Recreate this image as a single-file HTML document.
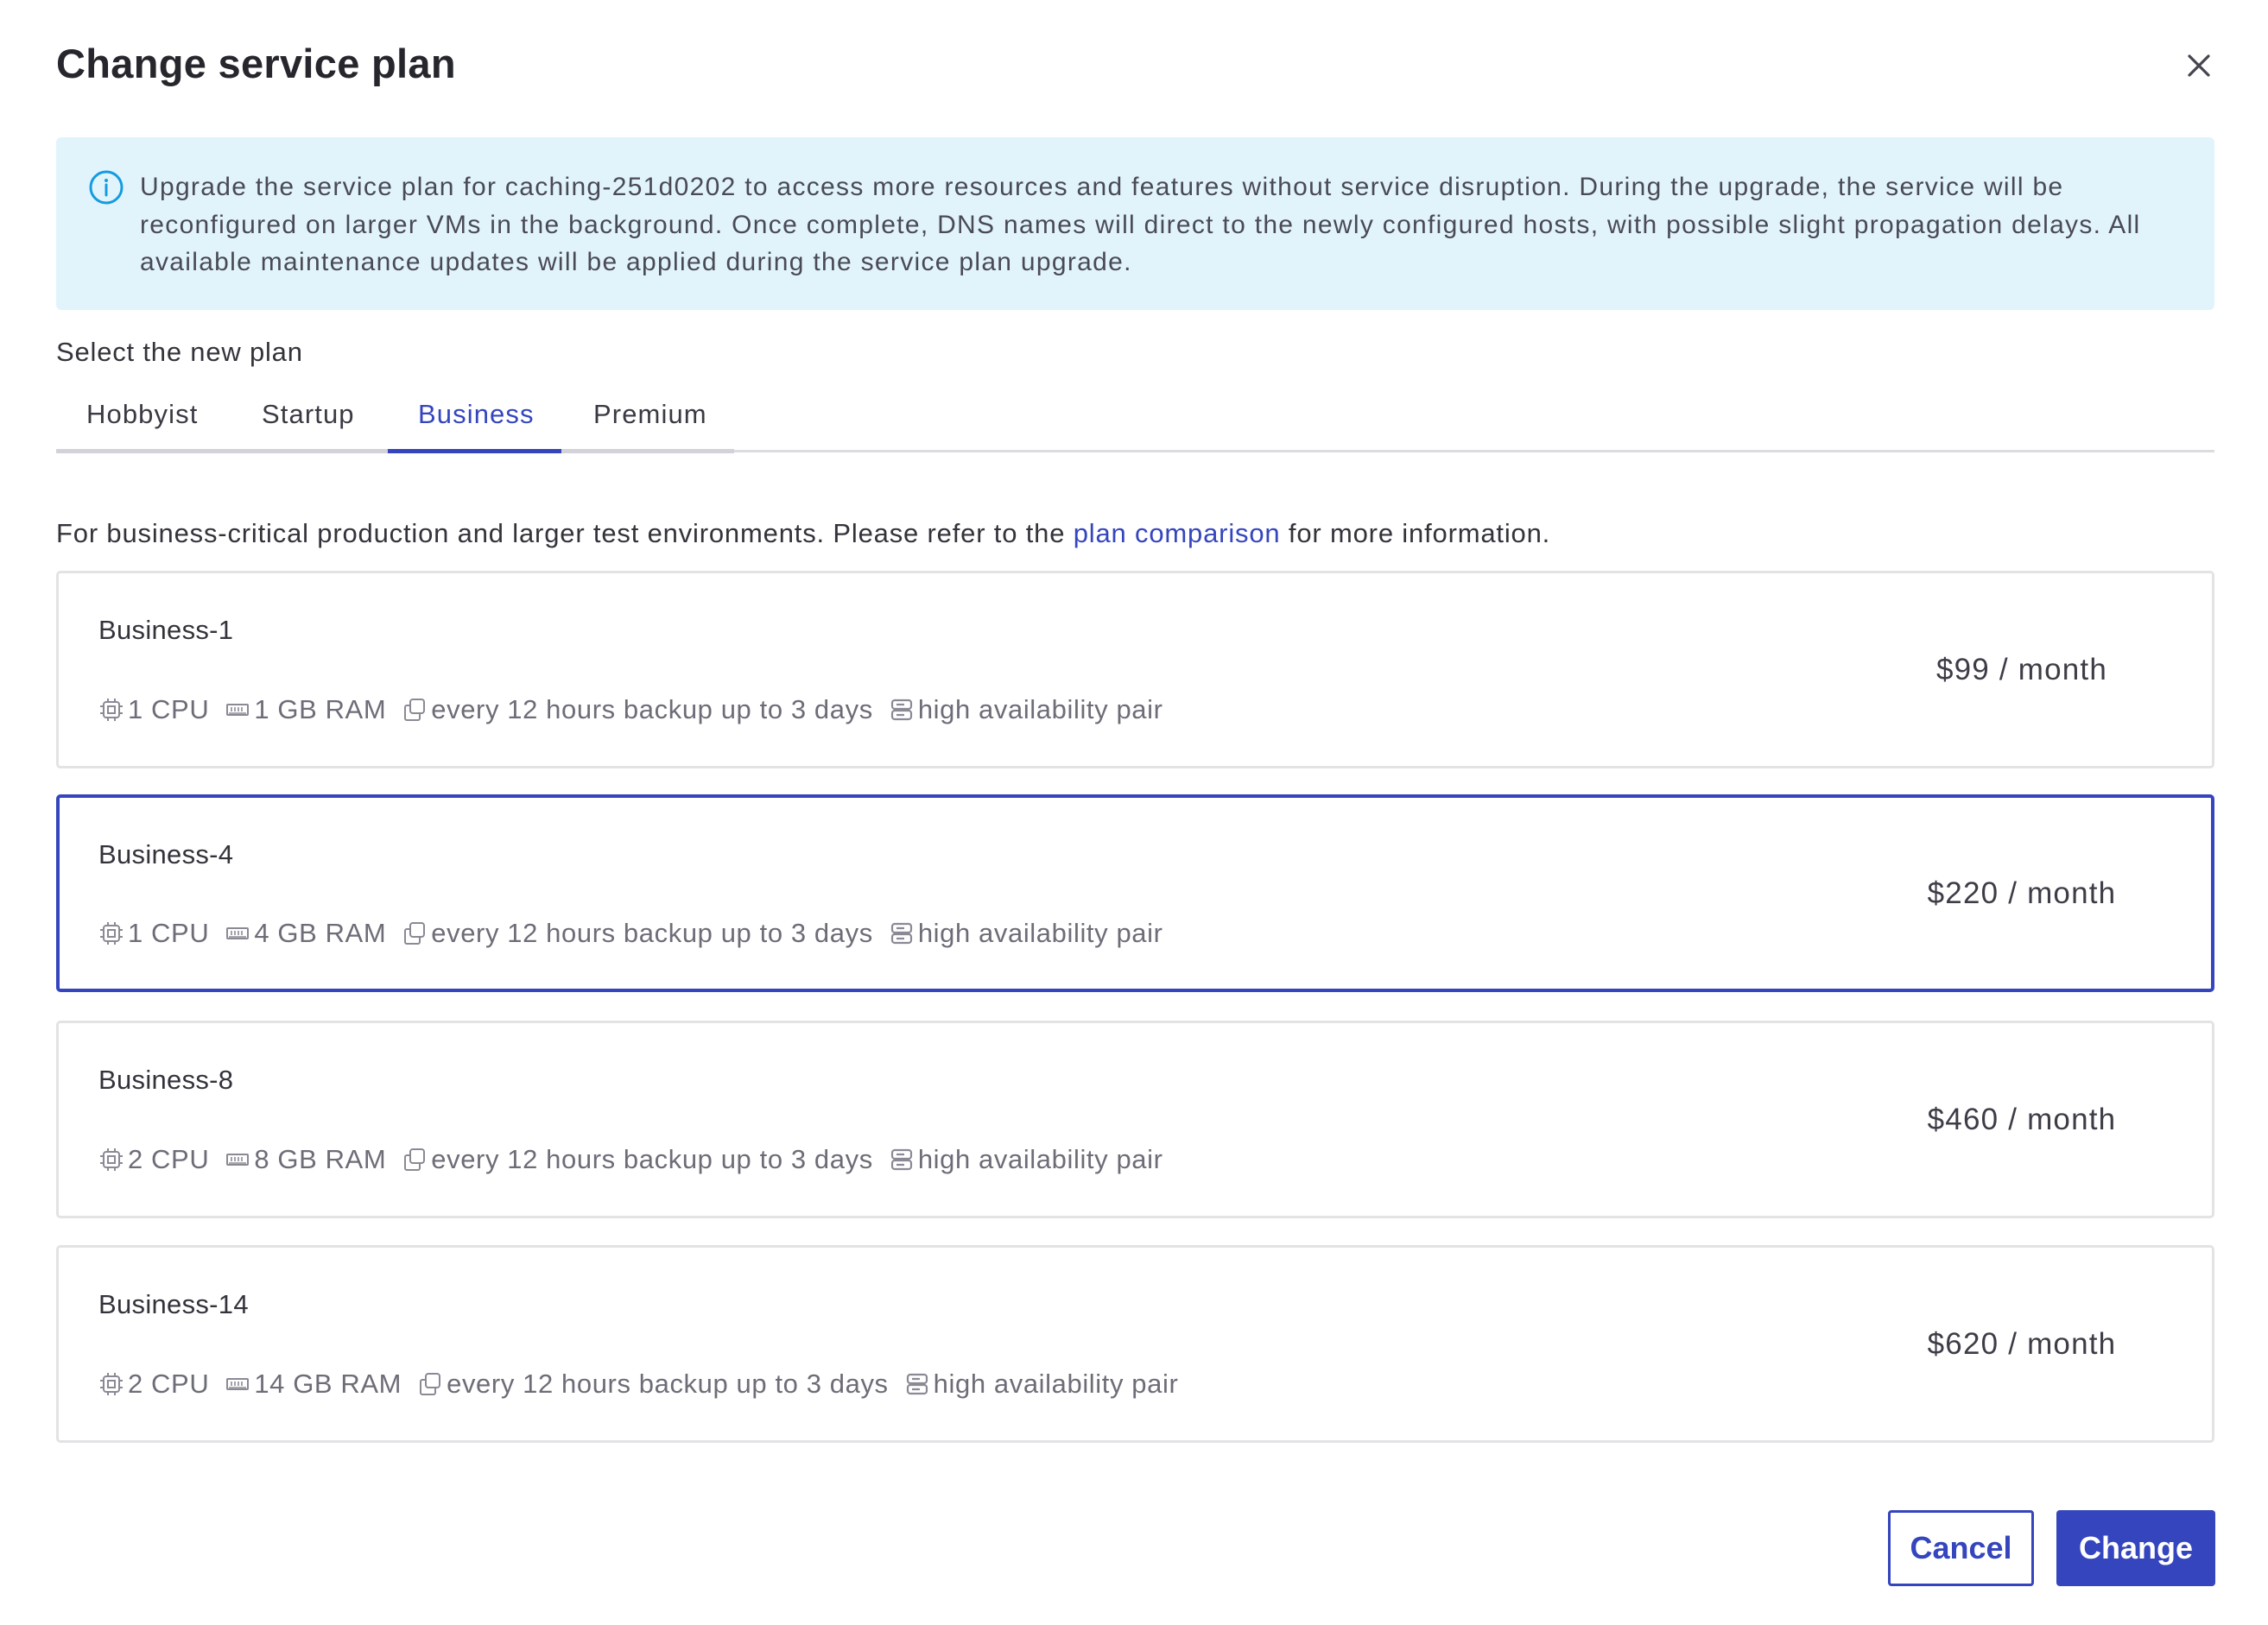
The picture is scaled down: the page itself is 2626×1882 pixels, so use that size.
<!DOCTYPE html>
<html><head><meta charset="utf-8"><style>
*{box-sizing:border-box;margin:0;padding:0}
body{width:2626px;height:1882px;background:#fff;font-family:"Liberation Sans",sans-serif;color:#2e2e36;position:relative;overflow:hidden}
.a{position:absolute;white-space:nowrap}
h1{position:absolute;left:65px;top:46px;font-size:47px;font-weight:bold;color:#26262d;letter-spacing:0.3px}
.info{position:absolute;left:65px;top:159px;width:2499px;height:200px;background:#e1f4fc;border-radius:6px}
.info p{position:absolute;left:97px;top:36px;width:2400px;font-size:30px;line-height:43.5px;color:#4a4a55;letter-spacing:1.3px;white-space:nowrap}
.tab{position:absolute;top:462px;font-size:31px;color:#3a3a44;letter-spacing:1.1px}
.card{position:absolute;left:65px;width:2499px;height:229px;border:3px solid #e3e3e6;border-radius:5px}
.card.sel{border:4px solid #3545be}
.name{position:absolute;left:46px;top:48px;font-size:31px;color:#33333b;letter-spacing:0.3px}
.spec{position:absolute;left:47px;top:140px;font-size:31px;color:#6d6d78;display:flex;align-items:center;white-space:nowrap;letter-spacing:0.6px}
.spec svg{margin-right:5px}
.spec span{margin-right:19px}
.price{position:absolute;right:0;width:400px;text-align:center;top:92px;font-size:35px;color:#3d3d47;margin-right:20px;letter-spacing:1.2px}
</style></head><body>
<h1>Change service plan</h1>
<svg class="a" style="left:2531px;top:61px" width="30" height="30" viewBox="0 0 30 30"><path d="M4 4L26 26M26 4L4 26" stroke="#45454f" stroke-width="3.2" stroke-linecap="round"/></svg>
<div class="info">
<svg class="a" style="left:37px;top:37px" width="42" height="42" viewBox="0 0 42 42"><circle cx="21" cy="21" r="18" fill="none" stroke="#149be0" stroke-width="3"/><circle cx="21" cy="13" r="2" fill="#149be0"/><path d="M21 18V30" stroke="#149be0" stroke-width="3" stroke-linecap="round"/></svg>
<p>Upgrade the service plan for caching-251d0202 to access more resources and features without service disruption. During the upgrade, the service will be<br>reconfigured on larger VMs in the background. Once complete, DNS names will direct to the newly configured hosts, with possible slight propagation delays. All<br>available maintenance updates will be applied during the service plan upgrade.</p>
</div>
<div class="a" style="left:65px;top:390px;font-size:31px;color:#33333b;letter-spacing:0.8px">Select the new plan</div>
<div class="tab" style="left:100px">Hobbyist</div>
<div class="tab" style="left:303px">Startup</div>
<div class="tab" style="left:484px;color:#3545be">Business</div>
<div class="tab" style="left:687px">Premium</div>
<div class="a" style="left:65px;top:521px;width:2499px;height:3px;background:#dcdce0"></div>
<div class="a" style="left:65px;top:520px;width:785px;height:5px;background:#d2d2d8"></div>
<div class="a" style="left:449px;top:520px;width:201px;height:5px;background:#3545be"></div>
<div class="a" style="left:65px;top:600px;font-size:31px;color:#33333b;letter-spacing:0.82px">For business-critical production and larger test environments. Please refer to the <span style="color:#3545be">plan comparison</span> for more information.</div>

<svg width="0" height="0" style="position:absolute"><defs>
<symbol id="cpu" viewBox="0 0 28 28"><rect x="5" y="5" width="18" height="18" rx="3" fill="none" stroke="#8a8a95" stroke-width="2"/><rect x="10" y="10" width="8" height="8" fill="none" stroke="#8a8a95" stroke-width="2"/><path d="M10 1v4M18 1v4M10 23v4M18 23v4M1 10h4M1 18h4M23 10h4M23 18h4" stroke="#8a8a95" stroke-width="2"/></symbol>
<symbol id="ram" viewBox="0 0 28 28"><rect x="2" y="8" width="24" height="12" rx="1" fill="none" stroke="#8a8a95" stroke-width="2"/><path d="M7 11v5M11 11v5M15 11v5M19 11v5M4 18h20" stroke="#8a8a95" stroke-width="1.6"/></symbol>
<symbol id="bk" viewBox="0 0 28 28"><rect x="9" y="2" width="16" height="16" rx="3" fill="none" stroke="#8a8a95" stroke-width="2"/><path d="M9 9H5a2 2 0 0 0-2 2v13a2 2 0 0 0 2 2h13a2 2 0 0 0 2-2v-6" fill="none" stroke="#8a8a95" stroke-width="2"/></symbol>
<symbol id="ha" viewBox="0 0 28 28"><rect x="3" y="3" width="22" height="10" rx="3" fill="none" stroke="#8a8a95" stroke-width="2.2"/><rect x="3" y="15" width="22" height="10" rx="3" fill="none" stroke="#8a8a95" stroke-width="2.2"/><path d="M8 8h9M8 20h9" stroke="#8a8a95" stroke-width="2.2"/></symbol>
</defs></svg>

<div class="card" style="top:661px"><div class="name">Business-1</div>
<div class="spec"><svg width="28" height="28"><use href="#cpu"/></svg><span>1 CPU</span><svg width="28" height="28"><use href="#ram"/></svg><span>1 GB RAM</span><svg width="28" height="28"><use href="#bk"/></svg><span>every 12 hours backup up to 3 days</span><svg width="28" height="28"><use href="#ha"/></svg><span>high availability pair</span></div>
<div class="price">$99 / month</div></div>

<div class="card sel" style="top:920px"><div class="name" style="left:45px">Business-4</div>
<div class="spec" style="left:46px;top:139px"><svg width="28" height="28"><use href="#cpu"/></svg><span>1 CPU</span><svg width="28" height="28"><use href="#ram"/></svg><span>4 GB RAM</span><svg width="28" height="28"><use href="#bk"/></svg><span>every 12 hours backup up to 3 days</span><svg width="28" height="28"><use href="#ha"/></svg><span>high availability pair</span></div>
<div class="price" style="top:91px;margin-right:19px">$220 / month</div></div>

<div class="card" style="top:1182px"><div class="name">Business-8</div>
<div class="spec"><svg width="28" height="28"><use href="#cpu"/></svg><span>2 CPU</span><svg width="28" height="28"><use href="#ram"/></svg><span>8 GB RAM</span><svg width="28" height="28"><use href="#bk"/></svg><span>every 12 hours backup up to 3 days</span><svg width="28" height="28"><use href="#ha"/></svg><span>high availability pair</span></div>
<div class="price">$460 / month</div></div>

<div class="card" style="top:1442px"><div class="name">Business-14</div>
<div class="spec"><svg width="28" height="28"><use href="#cpu"/></svg><span>2 CPU</span><svg width="28" height="28"><use href="#ram"/></svg><span>14 GB RAM</span><svg width="28" height="28"><use href="#bk"/></svg><span>every 12 hours backup up to 3 days</span><svg width="28" height="28"><use href="#ha"/></svg><span>high availability pair</span></div>
<div class="price">$620 / month</div></div>

<div class="a" style="left:2186px;top:1749px;width:169px;height:88px;border:3px solid #3545be;border-radius:4px;color:#3545be;font-size:36px;font-weight:bold;display:flex;align-items:center;justify-content:center">Cancel</div>
<div class="a" style="left:2381px;top:1749px;width:184px;height:88px;background:#3545be;border-radius:4px;color:#fff;font-size:36px;font-weight:bold;display:flex;align-items:center;justify-content:center">Change</div>
</body></html>
